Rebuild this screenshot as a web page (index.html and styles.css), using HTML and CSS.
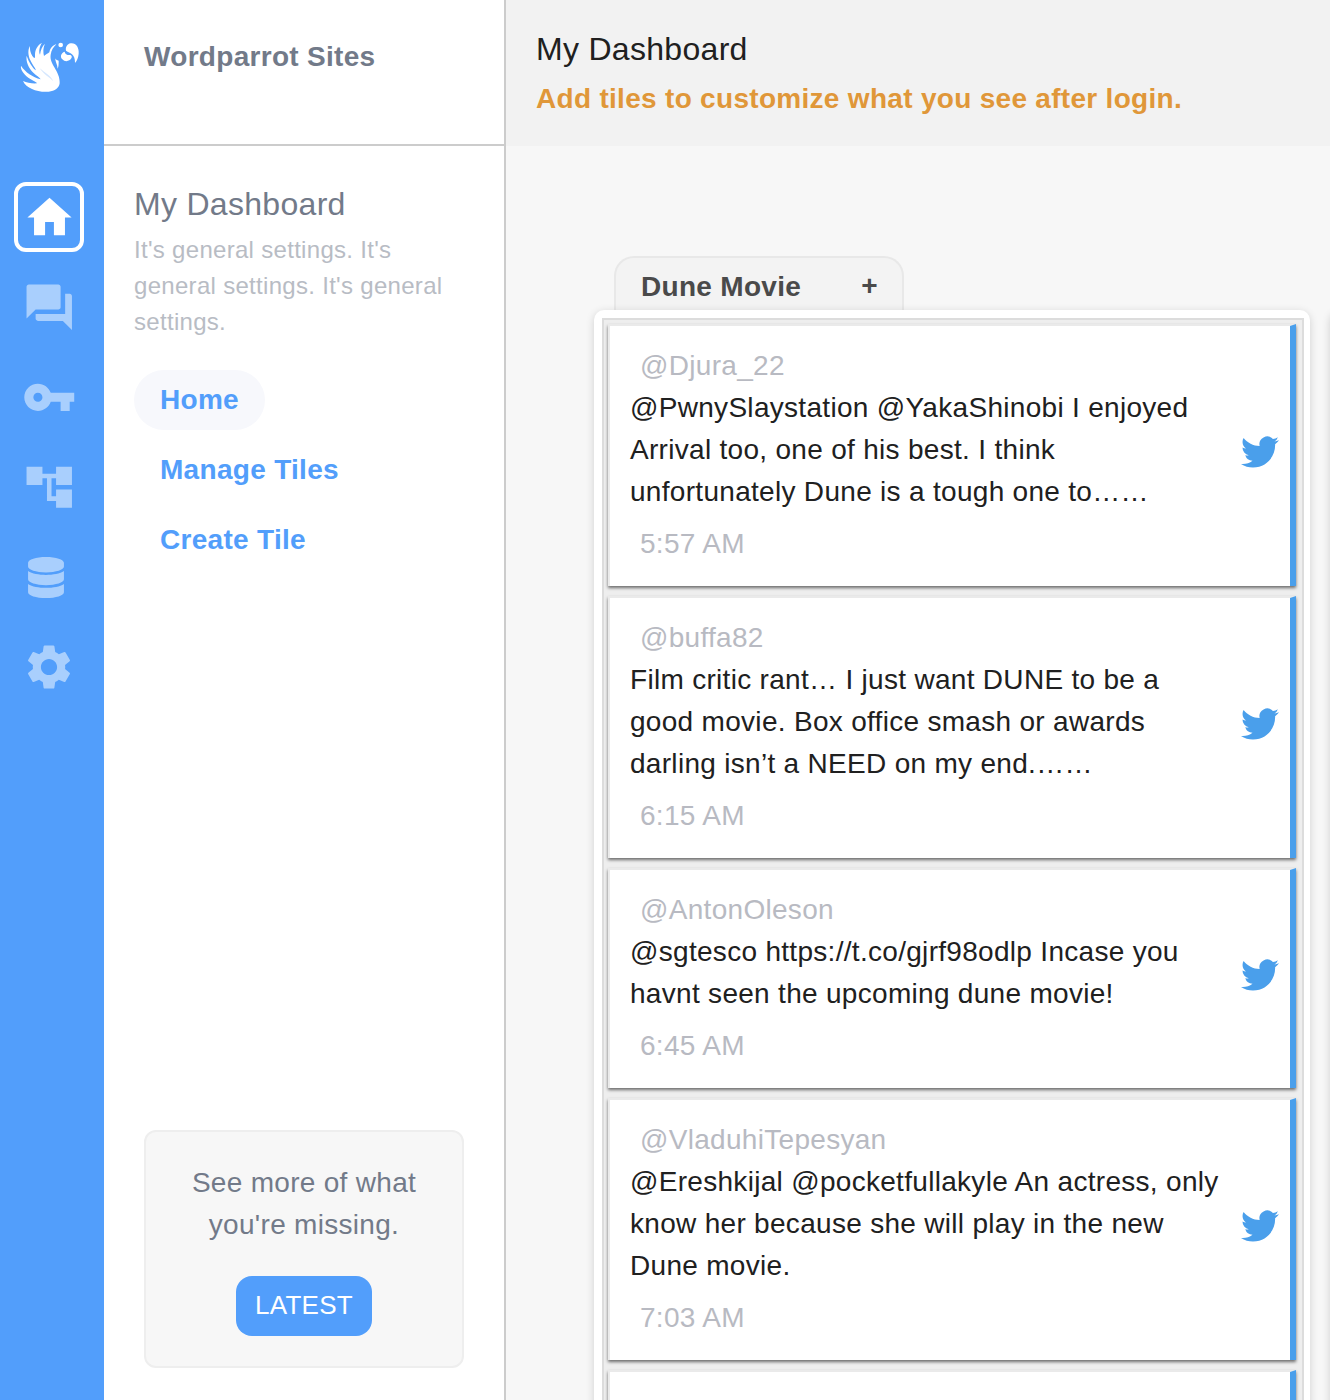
FILE: index.html
```html
<!DOCTYPE html>
<html lang="en">
<head>
<meta charset="utf-8">
<title>My Dashboard</title>
<link rel="stylesheet" href="styles.css">
</head>
<body>
<svg class="defs" aria-hidden="true">
  <symbol id="twitter" viewBox="0 0 24 24"><path d="M23.953 4.57a10 10 0 01-2.825.775 4.958 4.958 0 002.163-2.723c-.951.555-2.005.959-3.127 1.184a4.92 4.92 0 00-8.384 4.482C7.69 8.095 4.067 6.13 1.64 3.162a4.822 4.822 0 00-.666 2.475c0 1.71.87 3.213 2.188 4.096a4.904 4.904 0 01-2.228-.616v.06a4.923 4.923 0 003.946 4.827 4.996 4.996 0 01-2.212.085 4.936 4.936 0 004.604 3.417 9.867 9.867 0 01-6.102 2.105c-.39 0-.779-.023-1.17-.067a13.995 13.995 0 007.557 2.209c9.053 0 13.998-7.496 13.998-13.985 0-.21 0-.42-.015-.63A9.935 9.935 0 0024 4.59z"/></symbol>
</svg>
<div class="app">
  <nav class="rail">
    <svg class="logo" viewBox="0 0 312 300">
      <path d="M169 73C160 75 151 83 148 97C143 102 137 103 132 108C129 97 129 83 135 71C127 78 122 89 120 104C116 95 118 80 126 68C113 75 105 88 105 105C106 117 103 116 97 108C91 98 89 88 90 78C83 89 84 106 91 121C96 133 105 143 108 151C98 144 87 128 80 107C77 125 86 144 100 158C109 167 118 171 122 178C98 171 76 157 63 137C60 150 75 167 91 177C100 183 107 185 112 190C97 191 81 189 69 183C73 194 84 202 96 207C109 213 129 217 146 215C165 213 177 204 179 190C180 172 172 157 163 142C156 129 150 119 152 104C154 91 160 81 169 73Z"/>
      <path class="feather" d="M119 145C135 158 154 169 160 184C148 171 133 165 119 145Z"/>
      <circle cx="182" cy="75" r="7"/>
      <path d="M165 115C167 119 171 121 176 122C176 132 176 139 173 146C172 134 167 127 165 115Z"/>
      <path d="M194 95C182 99 180 111 187 118C195 127 209 124 214 115C217 110 215 106 211 105C202 106 195 102 194 95Z"/>
      <path d="M198 92C196 82 201 72 212 70C228 68 238 83 236 101C235 113 231 122 225 129C225 116 222 108 216 103C211 96 204 98 198 92Z"/>
    </svg>
    <a class="rail-item"><span class="active-box"><svg class="icon home" viewBox="0 0 24 24"><path d="M10 20v-6h4v6h5v-8h3L12 3 2 12h3v8z"/></svg></span></a>
    <a class="rail-item"><svg class="icon" viewBox="0 0 24 24"><path d="M21 6h-2v9H6v2c0 .55.45 1 1 1h11l4 4V7c0-.55-.45-1-1-1zm-4 6V3c0-.55-.45-1-1-1H3c-.55 0-1 .45-1 1v14l4-4h10c.55 0 1-.45 1-1z"/></svg></a>
    <a class="rail-item"><svg class="icon" viewBox="0 0 24 24"><path d="M12.65 10C11.83 7.67 9.61 6 7 6c-3.31 0-6 2.69-6 6s2.69 6 6 6c2.61 0 4.83-1.67 5.65-4H17v4h4v-4h2v-4H12.65zM7 14c-1.1 0-2-.9-2-2s.9-2 2-2 2 .9 2 2-.9 2-2 2z"/></svg></a>
    <a class="rail-item"><svg class="icon" viewBox="0 0 24 24"><path d="M22 11V3h-7v3H9V3H2v8h7V8h2v10h4v3h7v-8h-7v3h-2V8h2v3z"/></svg></a>
    <a class="rail-item"><svg class="icon database" viewBox="0 0 448 512"><path d="M448 73.143v45.714C448 159.143 347.667 192 224 192S0 159.143 0 118.857V73.143C0 32.857 100.333 0 224 0s224 32.857 224 73.143zM448 176v102.857C448 319.143 347.667 352 224 352S0 319.143 0 278.857V176c48.125 33.143 136.208 48.572 224 48.572S399.874 209.143 448 176zm0 160v102.857C448 479.143 347.667 512 224 512S0 479.143 0 438.857V336c48.125 33.143 136.208 48.572 224 48.572S399.874 369.143 448 336z"/></svg></a>
    <a class="rail-item"><svg class="icon gear" viewBox="0 0 24 24"><path d="M19.14 12.94c.04-.3.06-.61.06-.94 0-.32-.02-.64-.07-.94l2.03-1.58c.18-.14.23-.41.12-.61l-1.92-3.32c-.12-.22-.37-.29-.59-.22l-2.39.96c-.5-.38-1.03-.7-1.62-.94L14.4 2.81c-.04-.24-.24-.41-.48-.41h-3.84c-.24 0-.43.17-.47.41L9.25 5.35c-.59.24-1.13.57-1.62.94L5.24 5.33c-.22-.08-.47 0-.59.22L2.74 8.87c-.12.21-.08.47.12.61l2.03 1.58c-.05.3-.09.63-.09.94s.02.64.07.94l-2.03 1.58c-.18.14-.23.41-.12.61l1.92 3.32c.12.22.37.29.59.22l2.39-.96c.5.38 1.03.7 1.62.94l.36 2.54c.05.24.24.41.48.41h3.84c.24 0 .44-.17.47-.41l.36-2.54c.59-.24 1.13-.56 1.62-.94l2.39.96c.22.08.47 0 .59-.22l1.92-3.32c.12-.22.07-.47-.12-.61l-2.01-1.58zM12 15.6c-1.98 0-3.6-1.62-3.6-3.6s1.62-3.6 3.6-3.6 3.6 1.62 3.6 3.6-1.62 3.6-3.6 3.6z"/></svg></a>
  </nav>

  <aside class="sidebar">
    <header class="site-name">Wordparrot Sites</header>
    <section class="section">
      <h2 class="section-title">My Dashboard</h2>
      <p class="section-text">It's general settings. It's<br>general settings. It's general<br>settings.</p>
      <div class="menu">
        <a class="menu-item current">Home</a>
        <a class="menu-item">Manage Tiles</a>
        <a class="menu-item">Create Tile</a>
      </div>
    </section>
    <section class="promo">
      <p class="promo-text">See more of what<br>you're missing.</p>
      <a class="promo-button">LATEST</a>
    </section>
  </aside>

  <main class="main">
    <header class="page-head">
      <h1 class="page-title">My Dashboard</h1>
      <p class="page-note">Add tiles to customize what you see after login.</p>
    </header>
    <div class="tiles">
      <div class="tile">
        <div class="tab"><span>Dune Movie</span><span class="plus">+</span></div>
        <div class="panel">
          <div class="feed">
            <article class="card">
              <div class="body"><p class="user">@Djura_22</p><p class="text">@PwnySlaystation @YakaShinobi I enjoyed<br>Arrival too, one of his best. I think<br>unfortunately Dune is a tough one to……</p><p class="time">5:57 AM</p></div>
              <svg class="bird"><use href="#twitter"/></svg>
            </article>
            <article class="card">
              <div class="body"><p class="user">@buffa82</p><p class="text">Film critic rant… I just want DUNE to be a<br>good movie. Box office smash or awards<br>darling isn’t a NEED on my end.……</p><p class="time">6:15 AM</p></div>
              <svg class="bird"><use href="#twitter"/></svg>
            </article>
            <article class="card">
              <div class="body"><p class="user">@AntonOleson</p><p class="text">@sgtesco https://t.co/gjrf98odlp Incase you<br>havnt seen the upcoming dune movie!</p><p class="time">6:45 AM</p></div>
              <svg class="bird"><use href="#twitter"/></svg>
            </article>
            <article class="card">
              <div class="body"><p class="user">@VladuhiTepesyan</p><p class="text">@Ereshkijal @pocketfullakyle An actress, only<br>know her because she will play in the new<br>Dune movie.</p><p class="time">7:03 AM</p></div>
              <svg class="bird"><use href="#twitter"/></svg>
            </article>
            <article class="card next"></article>
          </div>
        </div>
      </div>
      <div class="tile following"><div class="panel"></div></div>
    </div>
  </main>
</div>
</body>
</html>
```
FILE: styles.css
```css
* { box-sizing: border-box; }
body, h1, h2, p { margin: 0; }
body {
  height: 1400px;
  overflow: hidden;
  background: #f7f7f7;
  color: #202020;
  font: 28px/42px "Liberation Sans", Helvetica, Arial, sans-serif;
  letter-spacing: 0.3px;
  white-space: nowrap;
}
h1, h2 { font-weight: 400; font-size: 32px; }
.defs { display: none; }
.app { display: flex; height: 1400px; }

.rail { flex: 0 0 104px; background: #529efb; padding-top: 20px; }
.logo { display: block; width: 104px; height: 100px; margin-bottom: 52px; fill: #fff; }
.feather { fill: #d5e7fe; }
.rail-item { display: flex; align-items: center; justify-content: center; width: 98px; height: 90px; }
.icon { display: block; width: 54.5px; height: 54.5px; fill: #a9cffd; }
.active-box { display: flex; flex: none; align-items: center; justify-content: center; width: 70px; height: 70px; border: 4px solid #fff; border-radius: 12px; }
.home { flex: none; width: 53px; height: 53px; fill: #fff; }
.database { width: 36px; height: 41px; margin-right: 6px; }
.gear { width: 54px; height: 54px; }

.sidebar { display: flex; flex-direction: column; flex: 0 0 402px; background: #fff; border-right: 2px solid #ccc; }
.site-name { height: 146px; padding: 36px 40px; border-bottom: 2px solid #ccc; color: #727a89; font-weight: 700; }
.section { padding: 36px 30px; color: #727a89; }
.section-title { line-height: 44px; }
.section-text { margin-top: 6px; color: #b8bcc4; font-size: 24px; line-height: 36px; }
.menu { display: flex; flex-direction: column; align-items: flex-start; gap: 10px; margin-top: 30px; }
.menu-item { height: 60px; padding: 0 26px; border-radius: 30px; color: #529efb; font-weight: 700; line-height: 60px; }
.current { background: #f7f8fc; }
.promo { display: flex; flex-direction: column; align-items: center; width: 320px; height: 238px; margin: auto 40px 32px; padding-top: 30px; border: 2px solid #eee; border-radius: 12px; background: #f7f7f7; color: #727a89; text-align: center; }
.promo-button { width: 136px; height: 60px; margin-top: 30px; border-radius: 16px; background: #529efb; color: #fff; font-size: 26px; line-height: 58px; }

.main { flex: 1; min-width: 0; }
.page-head { height: 146px; padding: 28px 30px; background: #f2f2f2; }
.page-note { margin-top: 8px; color: #e09739; font-weight: 700; }
.tiles { display: flex; gap: 20px; padding: 110px 0 0 88px; }
.tile { flex: 0 0 716px; }
.tab { display: flex; justify-content: space-between; width: 290px; height: 54px; margin-left: 20px; padding: 8px 24px 0 25px; border: 2px solid #e8e8e8; border-bottom: 0; border-radius: 20px 20px 0 0; background: #f3f3f3; color: #4a4a4a; font-weight: 700; }
.plus { line-height: 40px; }
.panel { position: relative; height: 1200px; padding: 8px 6px 8px 8px; border-radius: 10px; background: #fff; box-shadow: 0 2px 8px rgba(0, 0, 0, .16); }
.following { padding-top: 54px; }
.feed { display: flex; flex-direction: column; gap: 10px; height: 100%; padding: 4px 6px 4px 4px; border: 2px solid #dcdcdc; background: #eee; }
.panel { padding-right: 6px; }
.card { display: flex; justify-content: space-between; align-items: center; padding: 19px 11px 21px 20px; border: 2px solid #eaeaea; border-right: 6px solid #4a9feb; border-bottom: 0; background: #fff; box-shadow: 0 2px 3px rgba(0, 0, 0, .55); }
.user, .time { padding-left: 10px; color: #b8bac2; }
.time { margin-top: 10px; }
.bird { width: 38px; height: 38px; margin-bottom: 6px; fill: #4a9feb; }
.next { height: 262px; }
```
